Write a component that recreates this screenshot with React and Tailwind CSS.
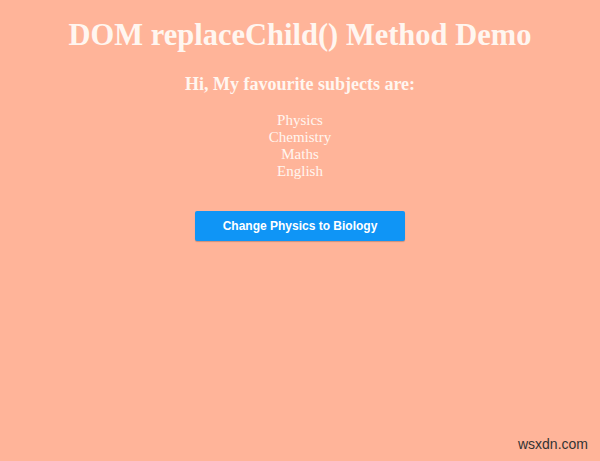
export default function App() {
  const subjects = ['Physics', 'Chemistry', 'Maths', 'English'];
  return (
    <div className="w-[600px] h-[461px] bg-[#ffb499] relative overflow-hidden text-center text-[#fff6f0] font-['Liberation_Serif',serif]">
      <h1 className="pt-[18px] text-[30.5px] leading-[34px] font-bold">DOM replaceChild() Method Demo</h1>
      <h3 className="mt-[21px] text-[18px] leading-[22px] font-bold">Hi, My favourite subjects are:</h3>
      <ul className="mt-[17px] text-[15px] leading-[17px]">
        {subjects.map((s) => (
          <li key={s}>{s}</li>
        ))}
      </ul>
      <div className="mt-[31px] flex justify-center">
        <button className="w-[210px] h-[30px] bg-[#0f95f6] rounded-[2px] text-white text-[12px] font-bold font-['Liberation_Sans',sans-serif] shadow-[0_1px_1px_rgba(0,0,0,0.2)]">
          Change Physics to Biology
        </button>
      </div>
      <div className="absolute right-[12px] bottom-[6px] text-[14px] text-[#333] font-['Liberation_Sans',sans-serif]">wsxdn.com</div>
    </div>
  );
}
